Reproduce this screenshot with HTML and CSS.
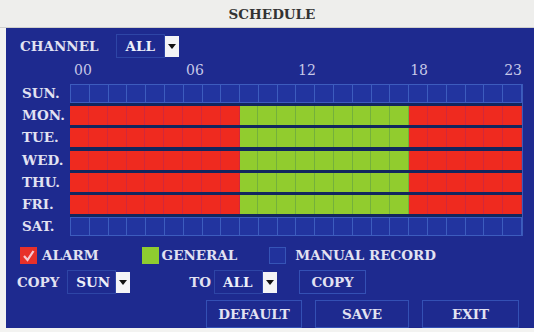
FILE: index.html
```html
<!DOCTYPE html>
<html>
<head>
<meta charset="utf-8">
<link rel="stylesheet" href="styles.css">
</head>
<body>
<div class="title">SCHEDULE</div>
<div class="panel">
  <div class="row-channel">
    <span class="lbl">CHANNEL</span>
    <div class="select sel-channel">
      <div class="sel-box">ALL</div>
      <div class="sel-arrow"><svg width="8" height="5" viewBox="0 0 8 5"><polygon points="0,0 8,0 4,5" fill="#111"/></svg></div>
    </div>
  </div>
  <div class="hours">
    <span class="h h0">00</span>
    <span class="h h6">06</span>
    <span class="h h12">12</span>
    <span class="h h18">18</span>
    <span class="h h23">23</span>
  </div>
  <div class="sched">
    <div class="days">
      <div class="day">SUN.</div>
      <div class="day">MON.</div>
      <div class="day">TUE.</div>
      <div class="day">WED.</div>
      <div class="day">THU.</div>
      <div class="day">FRI.</div>
      <div class="day">SAT.</div>
    </div>
    <div class="board">
      <div class="drow empty"><i></i><i></i><i></i><i></i><i></i><i></i><i></i><i></i><i></i><i></i><i></i><i></i><i></i><i></i><i></i><i></i><i></i><i></i><i></i><i></i><i></i><i></i><i></i><i></i></div>
      <div class="drow"><i class="r"></i><i class="r"></i><i class="r"></i><i class="r"></i><i class="r"></i><i class="r"></i><i class="r"></i><i class="r"></i><i class="r"></i><i class="g"></i><i class="g"></i><i class="g"></i><i class="g"></i><i class="g"></i><i class="g"></i><i class="g"></i><i class="g"></i><i class="g"></i><i class="r"></i><i class="r"></i><i class="r"></i><i class="r"></i><i class="r"></i><i class="r"></i></div>
      <div class="drow"><i class="r"></i><i class="r"></i><i class="r"></i><i class="r"></i><i class="r"></i><i class="r"></i><i class="r"></i><i class="r"></i><i class="r"></i><i class="g"></i><i class="g"></i><i class="g"></i><i class="g"></i><i class="g"></i><i class="g"></i><i class="g"></i><i class="g"></i><i class="g"></i><i class="r"></i><i class="r"></i><i class="r"></i><i class="r"></i><i class="r"></i><i class="r"></i></div>
      <div class="drow"><i class="r"></i><i class="r"></i><i class="r"></i><i class="r"></i><i class="r"></i><i class="r"></i><i class="r"></i><i class="r"></i><i class="r"></i><i class="g"></i><i class="g"></i><i class="g"></i><i class="g"></i><i class="g"></i><i class="g"></i><i class="g"></i><i class="g"></i><i class="g"></i><i class="r"></i><i class="r"></i><i class="r"></i><i class="r"></i><i class="r"></i><i class="r"></i></div>
      <div class="drow"><i class="r"></i><i class="r"></i><i class="r"></i><i class="r"></i><i class="r"></i><i class="r"></i><i class="r"></i><i class="r"></i><i class="r"></i><i class="g"></i><i class="g"></i><i class="g"></i><i class="g"></i><i class="g"></i><i class="g"></i><i class="g"></i><i class="g"></i><i class="g"></i><i class="r"></i><i class="r"></i><i class="r"></i><i class="r"></i><i class="r"></i><i class="r"></i></div>
      <div class="drow"><i class="r"></i><i class="r"></i><i class="r"></i><i class="r"></i><i class="r"></i><i class="r"></i><i class="r"></i><i class="r"></i><i class="r"></i><i class="g"></i><i class="g"></i><i class="g"></i><i class="g"></i><i class="g"></i><i class="g"></i><i class="g"></i><i class="g"></i><i class="g"></i><i class="r"></i><i class="r"></i><i class="r"></i><i class="r"></i><i class="r"></i><i class="r"></i></div>
      <div class="drow empty"><i></i><i></i><i></i><i></i><i></i><i></i><i></i><i></i><i></i><i></i><i></i><i></i><i></i><i></i><i></i><i></i><i></i><i></i><i></i><i></i><i></i><i></i><i></i><i></i></div>
    </div>
  </div>
  <div class="legend">
    <span class="sw sw-alarm"><svg width="17" height="17" viewBox="0 0 17 17"><polyline points="4,9 7.5,13 13.5,4" fill="none" stroke="#f6c8d0" stroke-width="2.2"/></svg></span>
    <span class="lg-alarm">ALARM</span>
    <span class="sw sw-general"></span>
    <span class="lg-general">GENERAL</span>
    <span class="sw sw-manual"></span>
    <span class="lg-manual">MANUAL RECORD</span>
  </div>
  <div class="row-copy">
    <span class="lbl">COPY</span>
    <div class="select sel-from">
      <div class="sel-box">SUN</div>
      <div class="sel-arrow"><svg width="8" height="5" viewBox="0 0 8 5"><polygon points="0,0 8,0 4,5" fill="#111"/></svg></div>
    </div>
    <span class="lbl lbl-to">TO</span>
    <div class="select sel-to">
      <div class="sel-box">ALL</div>
      <div class="sel-arrow"><svg width="8" height="5" viewBox="0 0 8 5"><polygon points="0,0 8,0 4,5" fill="#111"/></svg></div>
    </div>
    <div class="btn btn-copy">COPY</div>
  </div>
  <div class="row-buttons">
    <div class="btn btn-default">DEFAULT</div>
    <div class="btn btn-save">SAVE</div>
    <div class="btn btn-exit">EXIT</div>
  </div>
</div>
</body>
</html>
```
FILE: styles.css
```css
html, body {
  margin: 0;
  padding: 0;
}
body {
  width: 534px;
  height: 332px;
  overflow: hidden;
  background: #f3f3f1;
  font-family: "DejaVu Serif", "Liberation Serif", serif;
  font-weight: bold;
  font-size: 13.5px;
  color: #e2e2f2;
}
.title {
  border-bottom: 1px solid #cfcfcc;
  background: #eeeeec;
  color: #333;
  display: flex;
  align-items: center;
  justify-content: center;
  padding-left: 10px;
  box-sizing: border-box;
  height: 28px;
}
.panel {
  margin-left: 6px;
  height: 300px;
  background: #1e2a8f;
  display: flex;
  flex-direction: column;
}
.row-channel {
  margin-top: 6px;
  height: 24px;
  display: flex;
  align-items: center;
  padding-left: 14px;
}
.select {
  display: flex;
  align-items: center;
  height: 24px;
}
.sel-channel { margin-left: 18px; }
.sel-box {
  box-sizing: border-box;
  width: 49px;
  height: 24px;
  border: 1px solid #2e45a6;
  padding-left: 8px;
  line-height: 22px;
  color: #eef0fa;
}
.sel-arrow {
  width: 14px;
  height: 21px;
  background: #f4f4f6;
  display: flex;
  align-items: center;
  justify-content: center;
}
.hours {
  margin-top: 4px;
  margin-left: 64px;
  width: 452px;
  height: 17px;
  display: grid;
  grid-template-columns: repeat(24, 1fr);
  font-weight: normal;
  font-size: 14px;
  line-height: 17px;
  color: #c6c8e8;
}
.h {
  white-space: nowrap;
  text-align: center;
  padding-left: 4px;
}
.h0 { grid-column: 1; }
.h6 { grid-column: 7; }
.h12 { grid-column: 13; }
.h18 { grid-column: 19; }
.h23 { grid-column: 24; }
.sched {
  margin-top: 5px;
  display: flex;
  padding-left: 16px;
}
.days {
  width: 48px;
  display: flex;
  flex-direction: column;
  gap: 3.2px;
}
.day {
  height: 19px;
  line-height: 19px;
}
.board {
  width: 453px;
  display: flex;
  flex-direction: column;
  gap: 3.2px;
  background: #12265e;
  border-right: 1px solid #3a5ab8;
  box-sizing: border-box;
}
.drow {
  height: 19px;
  display: grid;
  grid-template-columns: repeat(24, 1fr);
  box-sizing: border-box;
}
.drow i {
  display: block;
  box-sizing: border-box;
}
.drow.empty {
  background: #22349f;
  border: 1px solid #3d5cbe;
  border-right: none;
}
.drow.empty i {
  border-right: 1px solid #3d5cbe;
}
.drow i.r {
  background: #ef2a1f;
  border-right: 1px solid #d2283a;
}
.drow i.g {
  background: #91cc2e;
  border-right: 1px solid #74b03c;
}
.legend {
  margin-top: 10px;
  height: 18px;
  display: flex;
  align-items: center;
  padding-left: 14px;
}
.sw {
  width: 17px;
  height: 17px;
  box-sizing: border-box;
  display: block;
}
.sw svg { display: block; }
.sw-alarm { background: #e8302a; }
.lg-alarm { margin-left: 5px; }
.sw-general { background: #8fcc30; margin-left: 43px; }
.lg-general { margin-left: 3px; }
.sw-manual { border: 1px solid #3654b6; background: #21329c; margin-left: 32px; }
.lg-manual { margin-left: 9px; }
.row-copy {
  margin-top: 6px;
  height: 24px;
  display: flex;
  align-items: center;
  padding-left: 11px;
}
.sel-from { margin-left: 8px; }
.lbl-to { margin-left: 59px; }
.sel-to { margin-left: 3px; }
.btn {
  box-sizing: border-box;
  border: 1px solid #3450b4;
  display: flex;
  align-items: center;
  justify-content: center;
  color: #e2e2f2;
}
.btn-copy {
  margin-left: 22px;
  width: 67px;
  height: 24px;
}
.row-buttons {
  margin-top: 6px;
  height: 28px;
  display: flex;
  justify-content: flex-end;
  gap: 13px;
  padding-right: 15px;
}
.row-buttons .btn { height: 28px; }
.btn-default { width: 96px; }
.btn-save { width: 94px; }
.btn-exit { width: 97px; }
```
